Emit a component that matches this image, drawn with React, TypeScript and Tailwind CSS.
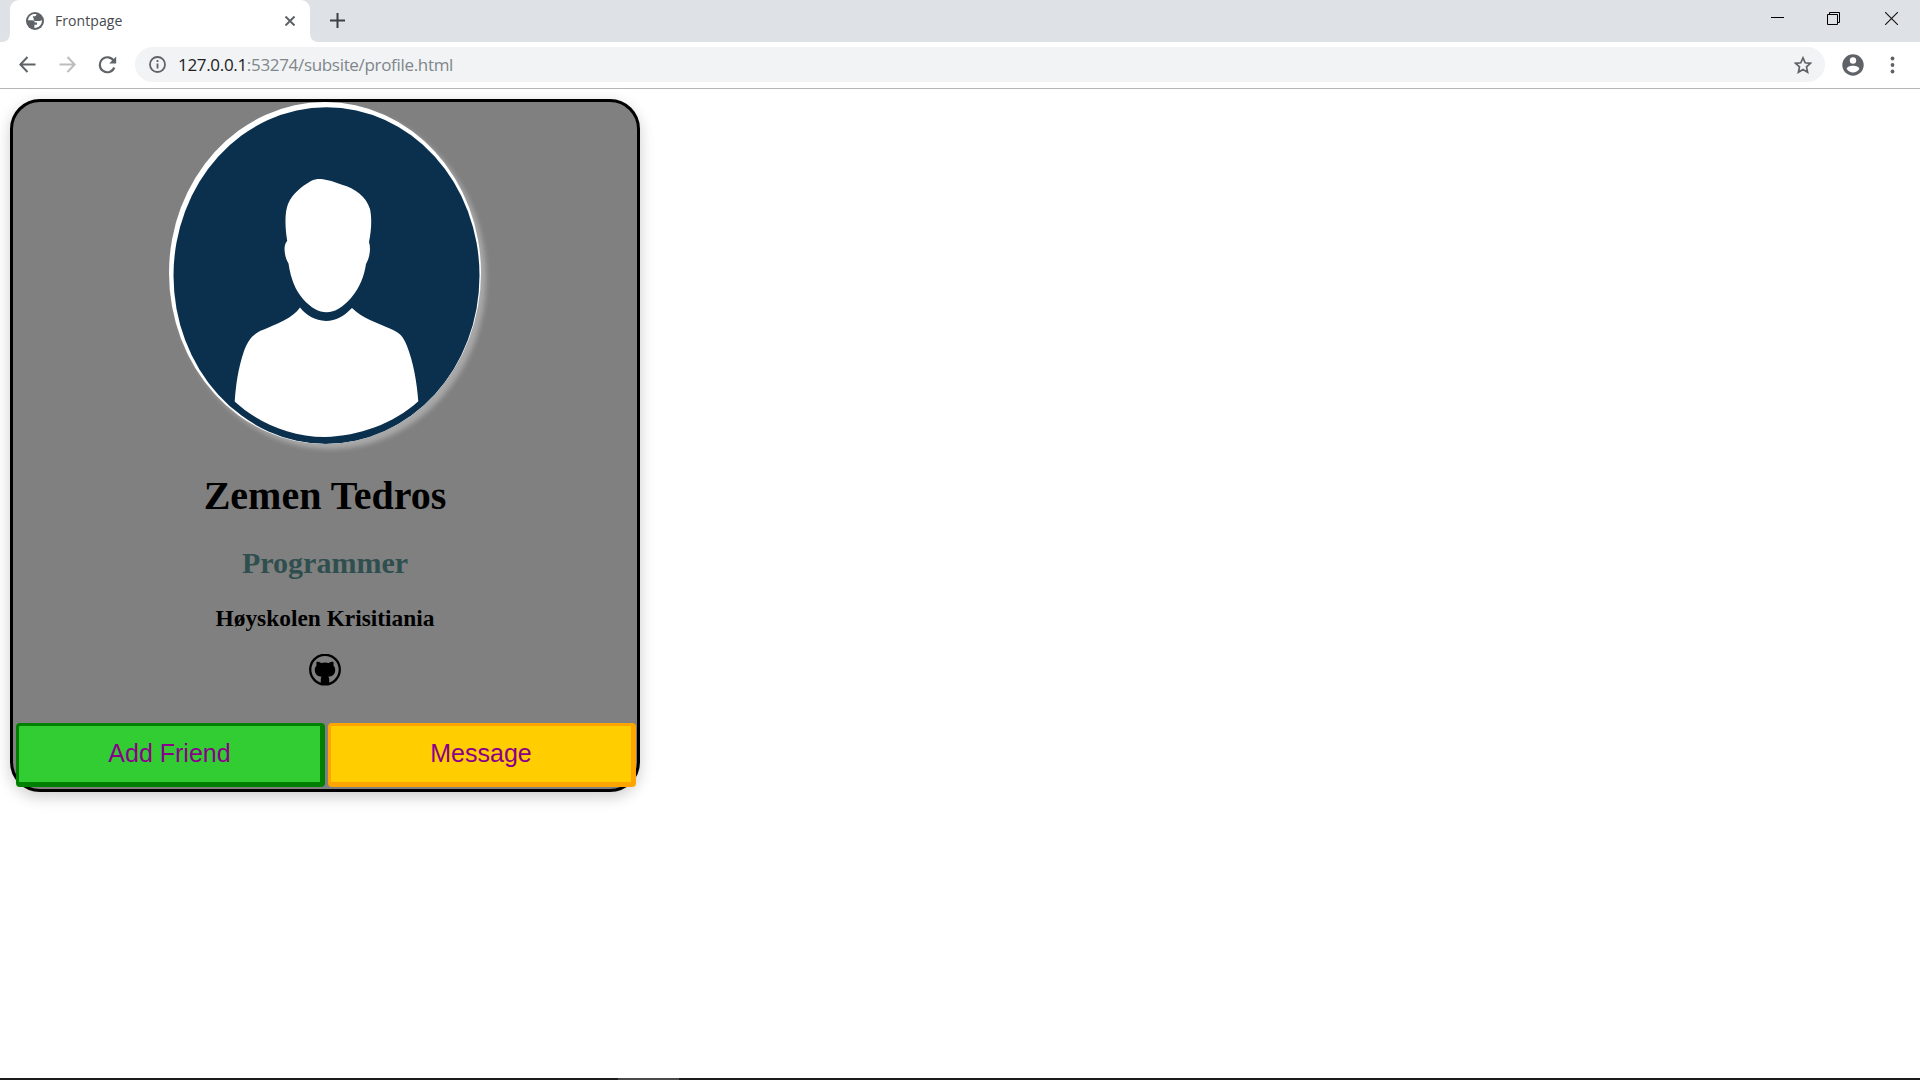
import React from "react";

function TabStrip() {
  return (
    <div className="flex h-[42px] items-start bg-[#dee1e6]">
      <div className="h-[42px] w-[10px] shrink-0 bg-white">
        <div className="h-full w-full rounded-br-[8px] bg-[#dee1e6]" />
      </div>
      <div className="flex h-[42px] w-[300px] shrink-0 items-center rounded-t-[9px] bg-white pl-4">
        <svg className="h-[18px] w-[18px] shrink-0" viewBox="0 0 18 18">
          <circle cx="9" cy="9" r="9" fill="#5f6368" />
          <path
            d="M10.500 2.200C6 1.400 2.300 4.300 2.100 8.300H6.300C7.900 8.300 8.700 9.200 8.700 10.500H11V12.700H8.400V15.900C12.600 16.100 15.900 12.900 15.900 9C15.900 8.700 15.900 8.400 15.800 8.100C14.900 8.900 13.600 9.400 12.200 8.900H9.200C8.200 8.900 7.700 8.200 7.700 7.200V5.700H6.900V4.300H9.300C10 3.900 10.400 3.200 10.500 2.200Z"
            fill="#fff"
          />
        </svg>
        <span className="ml-[11px] w-[230px] font-['Open_Sans',sans-serif] text-[14px] leading-5 tracking-[0.08px] text-[#45494d]">
          Frontpage
        </span>
        <svg className="h-[10px] w-[10px] shrink-0" viewBox="0 0 10 10">
          <path d="M.5.5l9 9M9.500.5l-9 9" stroke="#5f6368" strokeWidth="2" />
        </svg>
      </div>
      <div className="h-[42px] w-[10px] shrink-0 bg-white">
        <div className="h-full w-full rounded-bl-[8px] bg-[#dee1e6]" />
      </div>
      <svg className="mt-[13px] ml-[10px] h-[15px] w-[15px]" viewBox="0 0 15 15">
        <path d="M7.500 0v15M0 7.500h15" stroke="#3c4043" strokeWidth="2" />
      </svg>
      <div className="mt-3 mr-[22px] ml-auto flex">
        <svg className="h-[13px] w-[13px]" viewBox="0 0 13 13">
          <path d="M0 5.500h13" stroke="#000" />
        </svg>
        <svg className="ml-[43px] h-[13px] w-[13px]" viewBox="0 0 13 13">
          <path d="M.5 2.500h10v10H.5zM2.500 2.500v-2h10v10h-2" fill="none" stroke="#000" />
        </svg>
        <svg className="ml-[45px] h-[13px] w-[13px]" viewBox="0 0 13 13">
          <path d="M0 0l13 13M13 0L0 13" stroke="#111" strokeWidth="1.100" />
        </svg>
      </div>
    </div>
  );
}

function Toolbar() {
  return (
    <div className="flex h-[47px] items-start border-b border-[#b3b5b8] bg-white pt-[5px]">
      <div className="flex h-[35px] w-full items-center pl-[19px]">
        <svg className="h-[17px] w-[17px] shrink-0" viewBox="0 0 17 17" fill="none" stroke="#5f6368" strokeWidth="2">
          <path d="M16.500 8.500H1.500M8.500 1L1.300 8.500l7.200 7.500" />
        </svg>
        <svg className="ml-[23px] h-[17px] w-[17px] shrink-0" viewBox="0 0 17 17" fill="none" stroke="#bbbdbf" strokeWidth="2">
          <path d="M.5 8.500h15M8.500 1l7.200 7.500L8.500 16" />
        </svg>
        <svg className="ml-[22px] h-[18px] w-[19px] shrink-0" viewBox="0 0 19 18">
          <path d="M15.800 5A7.500 7.500 0 1 0 16.300 11.500" fill="none" stroke="#5f6368" strokeWidth="2.100" />
          <path d="M18.200.5v7h-7z" fill="#5f6368" />
        </svg>
        <div className="ml-[18px] flex h-[35px] w-[1690px] shrink-0 items-center rounded-full bg-[#f1f3f4] pr-[13.500px] pl-[14px]">
          <svg className="h-[17px] w-[17px] shrink-0" viewBox="0 0 17 17" fill="none" stroke="#5f6368">
            <circle cx="8.500" cy="8.500" r="7.500" strokeWidth="1.800" />
            <path d="M8.500 7.500v5M8.500 4v2" strokeWidth="1.800" />
          </svg>
          <span className="ml-3 font-['Open_Sans',sans-serif] text-[17px] leading-6 tracking-[-0.32px] whitespace-nowrap text-[#80868b]">
            <span className="text-[#202124]">127.0.0.1</span>:53274/subsite/profile.html
          </span>
          <svg className="ml-auto h-[18px] w-[18px]" viewBox="0 0 18 18">
            <path d="M9 1.900l2.200 4.900 5.200.5-3.900 3.600 1.100 5.300L9 13.500l-4.600 2.700 1.100-5.300-3.900-3.600 5.200-.5z" fill="none" stroke="#5f6368" strokeWidth="1.700" />
          </svg>
        </div>
        <svg className="ml-[16.500px] h-[22px] w-[22px] shrink-0" viewBox="0 0 22 22">
          <circle cx="11" cy="11" r="10.700" fill="#5f6368" />
          <circle cx="11" cy="6.500" r="3.200" fill="#fff" />
          <path d="M4.700 15C5 12.500 8 11.700 11 11.700s6 .8 6.300 3.300C15.800 17.200 13.600 18.500 11 18.500S6.200 17.200 4.700 15z" fill="#fff" />
        </svg>
        <svg className="ml-[26.500px] h-[18px] w-[5px] shrink-0" viewBox="0 0 5 18" fill="#5f6368">
          <circle cx="2.500" cy="2.500" r="1.900" />
          <circle cx="2.500" cy="9" r="1.900" />
          <circle cx="2.500" cy="15.500" r="1.900" />
        </svg>
      </div>
    </div>
  );
}

function Avatar() {
  return (
    <div className="h-[342px] w-[312px] overflow-hidden rounded-[50%] bg-white shadow-[5px_5px_5px_#a9a9a9]">
      <svg className="block h-full w-full" viewBox="169 102 312 342">
        <ellipse cx="326.500" cy="275.600" rx="153" ry="168.400" fill="#0b304e" />
        <path
          d="M323 179.300C319 178.700 315 179 311 181C301 187 293 193 288 204C284.500 213 285 227 287.200 241C283 245 284 256 288.500 263.500C291 280 295.500 290 303 299C311 308 319 312.300 326.500 312.300C335 312.300 343 307 351 298C360 287 364 277 366 264C370 257 371 248 369 242C371.500 230 372 218 370 209C366 196 355 188.500 342 184.700Q333 180.700 323 179.300Z"
          fill="#fff"
        />
        <path
          d="M300 307.500C293 318 277 324 260 331C251 336 248 341 244 351C238 369 236 384 234.700 401.500C257 422 289 437 325 437C359 436 393 424 418.300 401.300C417 382 413 361 407 346C403 336 400 333 391 329C377 323 362 318 352 308C344 316 336 321 326 321C315 320.500 306 315 300 307.500Z"
          fill="#fff"
        />
      </svg>
    </div>
  );
}

function GithubMark() {
  return (
    <svg className="mt-[23px] h-[32px] w-[32px]" viewBox="0 0 32 32">
      <circle cx="16" cy="15.600" r="14.800" fill="none" stroke="#000" strokeWidth="2.300" />
      <path
        d="M7.800 7.800C9.600 7.800 11.200 8.300 12.200 8.900Q16 8.300 19.800 8.900C20.800 8.300 22.400 7.800 24.200 7.800C24.800 9.300 24.700 10.600 24.400 11.500C25.800 12.900 26.300 14.300 26.200 16.200C26 20.600 23.200 22.300 19.200 22.800C20 23.500 20.200 24.400 20.200 25.400V30.500H11.800V25.400C11.800 24.400 12 23.500 12.800 22.800C8.800 22.300 6 20.600 5.800 16.200C5.700 14.300 6.200 12.900 7.600 11.500C7.300 10.600 7.200 9.300 7.800 7.800Z"
        fill="#000"
      />
    </svg>
  );
}

export default function App() {
  return (
    <div className="flex h-[1080px] w-[1920px] flex-col overflow-hidden bg-white">
      <TabStrip />
      <Toolbar />
      <main className="flex-1 pt-[10px] pl-[10px]">
        <section className="flex h-[693px] w-[630px] flex-col items-center rounded-[30px] border-[3px] border-black bg-[#808080] font-['Liberation_Serif',serif] font-bold text-black shadow-[0_5px_15px_rgba(0,0,0,0.2)]">
          <Avatar />
          <h1 className="mt-[29px] text-[40px] leading-[46px]">Zemen Tedros</h1>
          <h2 className="mt-[27px] text-[30px] leading-[34px] text-[#2f4f4f]">Programmer</h2>
          <h3 className="mt-[25px] text-[23.4px] leading-[26px]">Høyskolen Krisitiania</h3>
          <GithubMark />
          <div className="mt-[37px] flex w-full gap-[3px] pl-[3px] font-['Liberation_Sans',sans-serif] text-[25px] font-normal">
            <button className="h-[64px] w-[309px] shrink-0 rounded-[4px] border-t-[3px] border-r-[5px] border-b-[5px] border-l-[3px] border-[#008000] bg-[#32cd32] text-[#8b008b]">
              Add Friend
            </button>
            <button className="h-[64px] w-[308px] shrink-0 rounded-[4px] border-t-[3px] border-r-[5px] border-b-[5px] border-l-[3px] border-[#ffa500] bg-[#ffcd00] text-[#8b008b]">
              Message
            </button>
          </div>
        </section>
      </main>
      <footer className="flex h-[2px] shrink-0 bg-[#1c1a1b]">
        <div className="ml-[618px] w-[61px] bg-[#4a4849]" />
      </footer>
    </div>
  );
}
